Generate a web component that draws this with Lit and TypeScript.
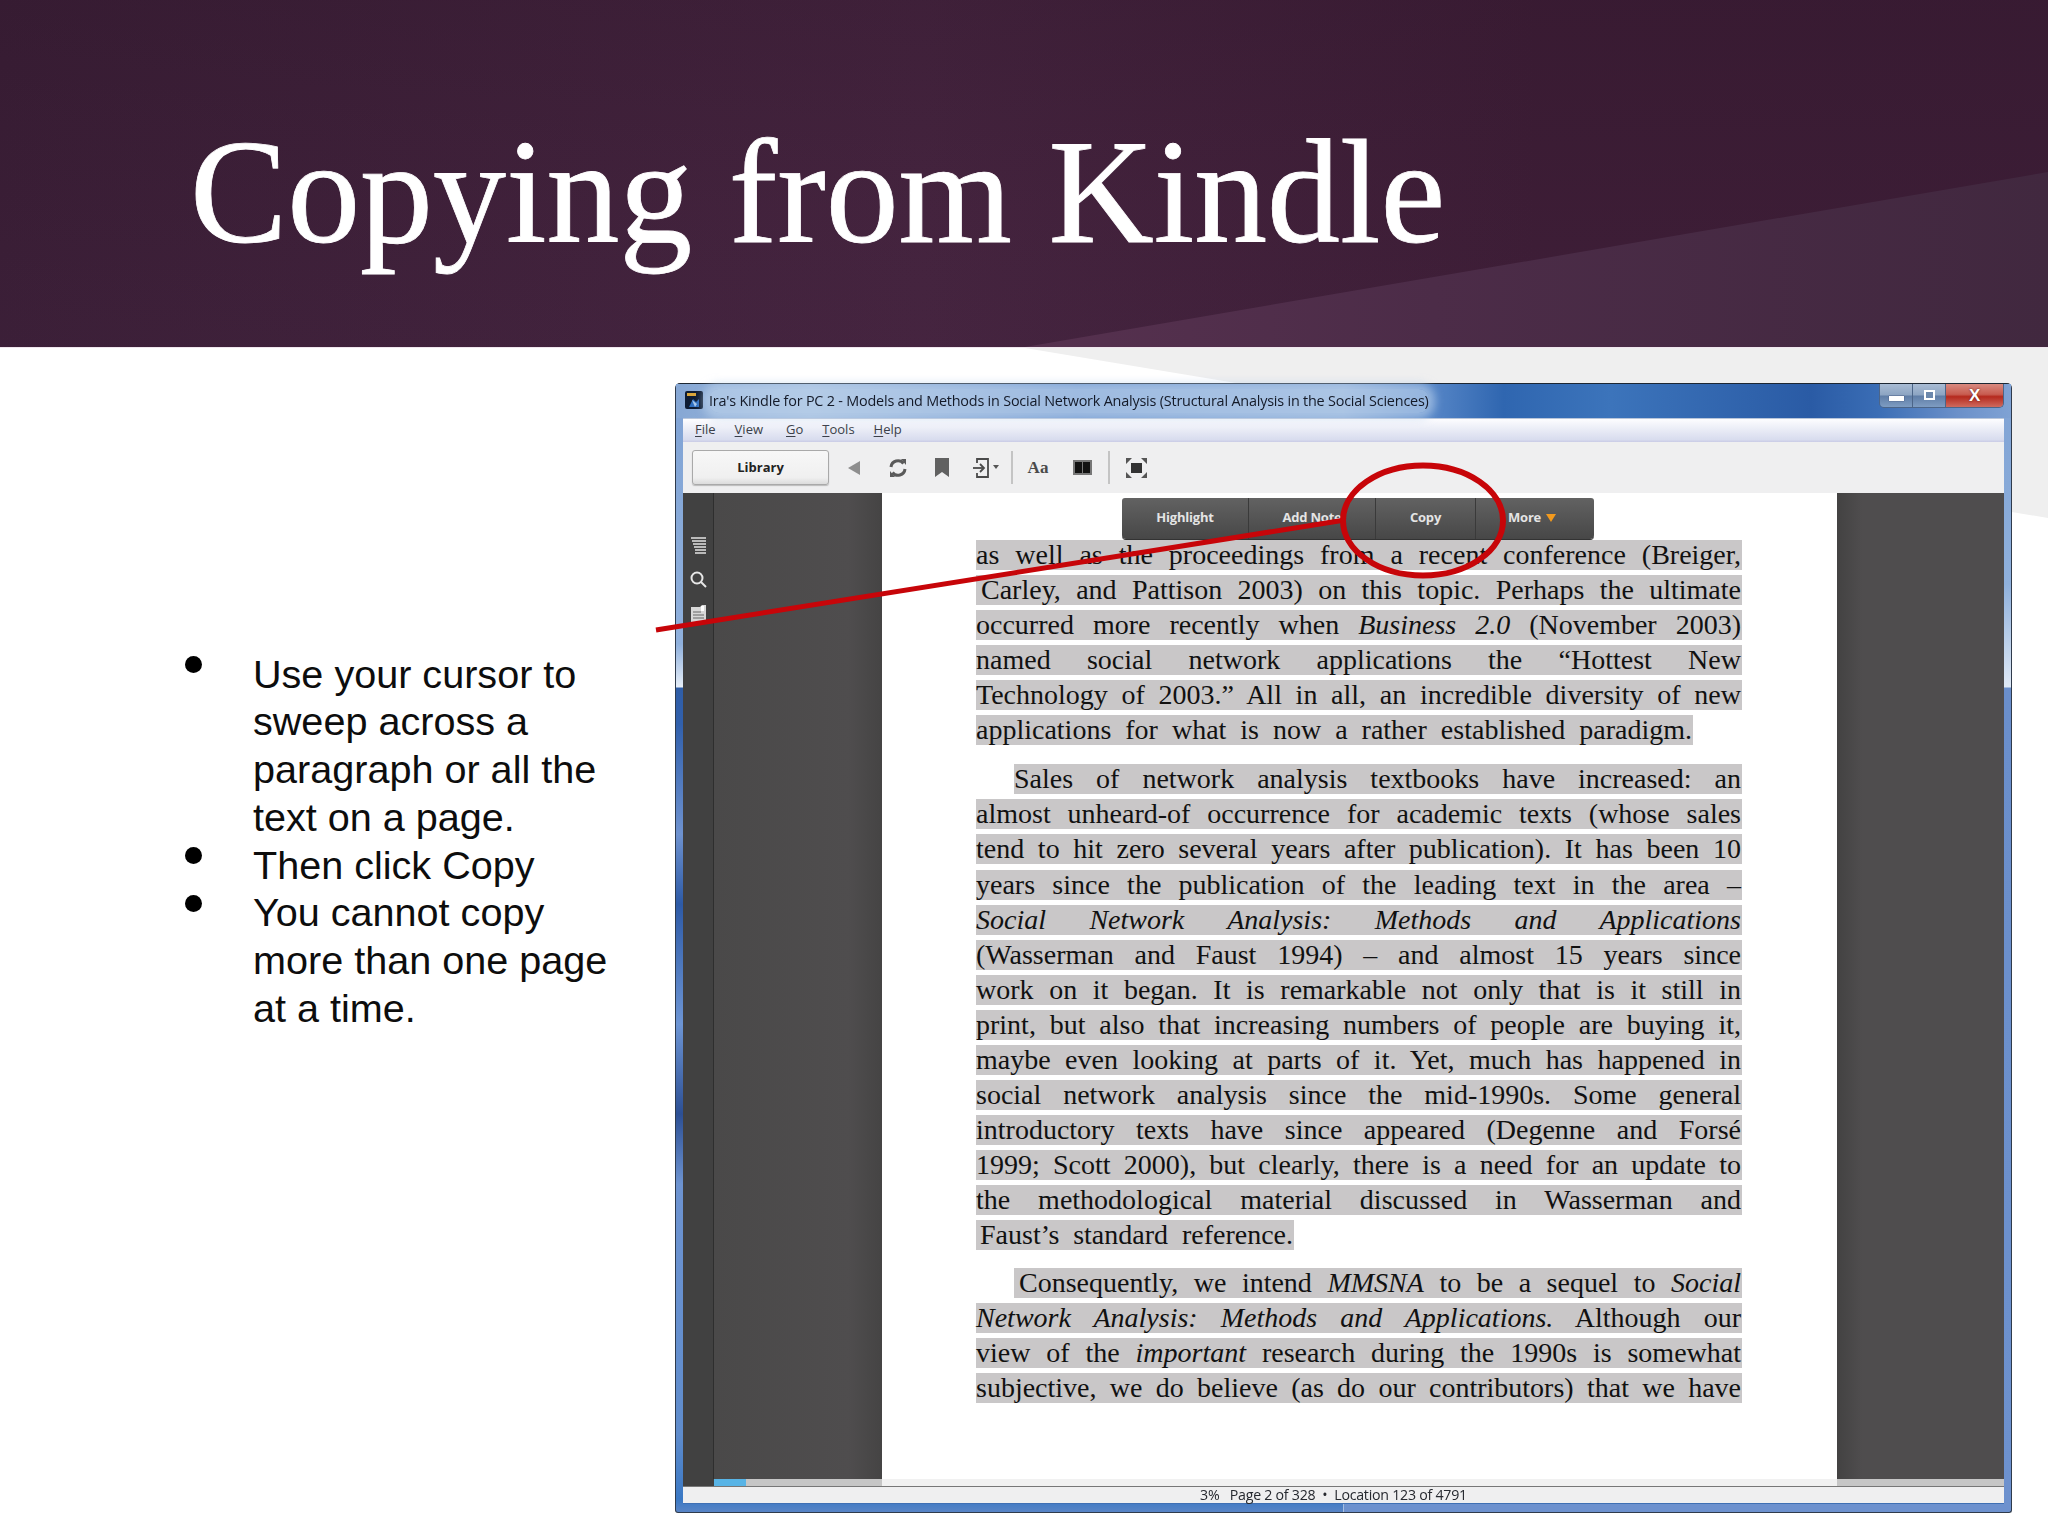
import { LitElement, html, css, svg } from "lit";
import { customElement } from "lit/decorators.js";

type Line = { t: unknown; ml?: number; pl?: number; w?: number };

const paragraphs: Line[][] = [
  [
    { t: "as well as the proceedings from a recent conference (Breiger," },
    { t: "Carley, and Pattison 2003) on this topic. Perhaps the ultimate", pl: 5 },
    { t: html`occurred more recently when <i>Business 2.0</i> (November 2003)` },
    { t: "named social network applications the “Hottest New" },
    { t: "Technology of 2003.” All in all, an incredible diversity of new" },
    { t: "applications for what is now a rather established paradigm.", w: 717 },
  ],
  [
    { t: "Sales of network analysis textbooks have increased: an", ml: 38 },
    { t: "almost unheard-of occurrence for academic texts (whose sales" },
    { t: "tend to hit zero several years after publication). It has been 10" },
    { t: "years since the publication of the leading text in the area –" },
    { t: html`<i>Social Network Analysis: Methods and Applications</i>` },
    { t: "(Wasserman and Faust 1994) – and almost 15 years since" },
    { t: "work on it began. It is remarkable not only that is it still in" },
    { t: "print, but also that increasing numbers of people are buying it," },
    { t: "maybe even looking at parts of it. Yet, much has happened in" },
    { t: "social network analysis since the mid-1990s. Some general" },
    { t: "introductory texts have since appeared (Degenne and Forsé" },
    { t: "1999; Scott 2000), but clearly, there is a need for an update to" },
    { t: "the methodological material discussed in Wasserman and" },
    { t: "Faust’s standard reference.", pl: 4, w: 318 },
  ],
  [
    { t: html`Consequently, we intend <i>MMSNA</i> to be a sequel to <i>Social</i>`, ml: 38, pl: 5 },
    { t: html`<i>Network Analysis: Methods and Applications.</i> Although our` },
    { t: html`view of the <i>important</i> research during the 1990s is somewhat` },
    { t: "subjective, we do believe (as do our contributors) that we have" },
  ],
];

const bullets = [
  ["Use your cursor to", "sweep across a", "paragraph or all the", "text on a page."],
  ["Then click Copy"],
  ["You cannot copy", "more than one page", "at a time."],
];

@customElement("app-root")
export class AppRoot extends LitElement {
  static styles = css`
    :host { display: block; }
    .slide { position: relative; width: 2048px; height: 1536px; overflow: hidden; background: #fff; }
    .greytri { position: absolute; left: 0; top: 348px; width: 2048px; height: 172px; background: #efefef; clip-path: polygon(1025px 0, 2048px 0, 2048px 170px); }
    .header { position: relative; height: 348px; box-sizing: border-box; padding-left: 190px; background:
        linear-gradient(180deg, rgba(40,18,36,.22) 0%, rgba(40,18,36,.04) 60%, rgba(70,40,70,.12) 100%),
        linear-gradient(90deg, #3a1e36 0%, #45243f 45%, #3d1d36 75%, #3c1d36 100%);
        border-bottom: 1px solid #f0e6ee; overflow: hidden; }
    .hi { position: absolute; inset: 0; background: linear-gradient(90deg, #56314f 50%, #4c2c48 70%, #41283f 100%); clip-path: polygon(1025px 347px, 2048px 172px, 2048px 347px); }
    h1 { position: relative; margin: 0; padding-top: 107px; font: 400 148px/1.15 "Liberation Serif", serif; color: #fff; white-space: nowrap; transform: scaleX(.985); transform-origin: left top; -webkit-text-stroke: .8px #fff; }
    .body { position: relative; display: grid; grid-template-columns: 675px 1337px; }
    .notes { padding: 302.5px 0 0 185px; color: #0d0d0d; font: 39.6px/47.8px "Liberation Sans", sans-serif; }
    .item { display: flex; }
    .dot { flex: none; width: 17px; height: 17px; border-radius: 50%; background: #000; margin: 5.5px 51px 0 0; }
    .item div.txt div { white-space: nowrap; }
    .window { margin-top: 35px; height: 1130px; box-sizing: border-box; display: flex; flex-direction: column; padding: 0 7px 8px; border: 1px solid #2f3b4c; border-top-color: #1d2733; border-radius: 5px 5px 3px 3px; filter: blur(.55px);
      background:
        linear-gradient(180deg, #7fa2d4 0, #8fb0dc 260px, #e6eef8 303px, #2f5da6 304px, #3160ac 340px, #6e92cf 450px, #2d5aa6 520px, #6d95d4 640px, #2c4f94 730px, #6d93d0 800px, #5f8ccc 1050px, #3a78c4 1115px, #5d86c6 1130px) left / 50% 100% no-repeat,
        linear-gradient(180deg, #7fa2d4 0, #8fb0dc 200px, #dfe9f6 303px, #6a8ecb 304px, #6d91ce 1130px) right / 50% 100% no-repeat; }
    .title { flex: none; height: 34px; margin: 0 -7px; padding: 0 7px 0 9px; display: flex; align-items: flex-start; position: relative; color: #141a28;
      font: 14.4px/36px "Open Sans", sans-serif; letter-spacing: -.2px;
      background: linear-gradient(90deg, #86a7d4 0, #a4bede 10%, #6f97cf 30%, #8eaed8 50%, #5a89c9 56%, #2f66b0 62%, #3c74bb 70%, #2a5ba5 85%, #3a6db5 90%, #6b90c9 96%, #7fa2d4 100%); }
    .tt { background: rgba(190,212,236,.6); box-shadow: 0 0 8px 6px rgba(190,212,236,.6); height: 24px; margin-top: 5px; line-height: 24px; border-radius: 10px; white-space: nowrap; }
    .logo { flex: none; width: 18px; height: 18px; margin: 7px 6px 0 0; }
    .ctrl { margin-left: auto; display: flex; height: 24px; box-sizing: border-box; border: 1px solid #4c6588; border-top: 0; border-radius: 0 0 5px 5px; overflow: hidden; }
    .ctrl div { display: flex; align-items: center; justify-content: center; width: 32px; background: linear-gradient(180deg, #a9bcd4 0, #8ca4c2 48%, #5f7da6 52%, #7e9cc2 100%); border-right: 1px solid #4c6588; }
    .ctrl .x { width: 57px; border: 0; background: linear-gradient(180deg, #d98a80 0, #c85c50 45%, #b52a1e 55%, #cf6a5e 100%); color: #fff; font: 700 17px/1 "Liberation Sans", sans-serif; text-shadow: 0 0 2px #5a1a10; }
    .min { width: 15px; height: 5px; background: #fff; margin-top: 6px; box-shadow: 0 0 1px #335; }
    .max { width: 11px; height: 10px; border: 2px solid #fff; box-sizing: border-box; background: #6c88ac; margin-top: -2px; }
    .menu { flex: none; height: 24px; display: flex; align-items: flex-start; padding-left: 12px; color: #3b3f49; font: 13px/20px "Open Sans", sans-serif; border-top: 1px solid #b9c6da; box-sizing: border-box;
      background: linear-gradient(180deg, #fdfdff 0, #eef0f8 35%, #d8dcee 90%, #c9cbe6 100%); }
    .menu u { text-underline-offset: 2px; }
    .menu span { margin-right: 19px; }
    .menu span:nth-child(2) { margin-right: 23px; }
    .tools { flex: none; height: 51px; display: flex; align-items: center; padding-left: 9px; background: #efeff0; }
    .lib { width: 137px; height: 35px; box-sizing: border-box; margin-right: 3px; border: 1px solid #a9a9a9; border-radius: 3px; display: flex; align-items: center; justify-content: center; background: linear-gradient(180deg, #f7f7f7, #f0f0f0 80%, #dcdcdc); box-shadow: 0 1px 1px #bbb; color: #222; font: 700 13px/1 "Open Sans", sans-serif; }
    .ic { flex: none; width: 44px; display: flex; justify-content: center; }
    .aa { font: 700 17px/20px "Liberation Serif", serif; color: #4a4a4a; }
    .sep { flex: none; width: 2px; height: 33px; background: #c4c4c4; margin: 0 3px 0 3px; }
    .sep.b { margin: 0 4px 0 4px; }
    .content { flex: 1; min-height: 0; display: grid; grid-template-columns: 31px 168px 955px 167px; box-shadow: inset 0 3px 2px -1px #aaa; }
    .side { background: #414141; border-right: 1px solid #2e2e2e; display: flex; flex-direction: column; align-items: center; padding-top: 44px; gap: 17px; box-sizing: border-box; }
    .side svg { display: block; }
    .gutter { background: linear-gradient(90deg, #4a4949, #4f4d4e 80%, #454444 100%); }
    .gutter.r { background: linear-gradient(90deg, #434242, #4f4d4e 15%); }
    .page { background: #fff; padding: 5px 0 0 94px; box-sizing: border-box; overflow: hidden; }
    .popup { margin-left: 146px; width: 472px; height: 41px; display: grid; grid-template-columns: 126px 127px 100px 119px; border-radius: 3px 3px 4px 4px; background: linear-gradient(180deg, #626262, #474747); color: #e4e4e4; font: 700 13px/39px "Open Sans", sans-serif; text-align: center; box-shadow: 0 1px 0 #333; margin-bottom: 1px; letter-spacing: -.2px; }
    .popup div + div { border-left: 1px solid #3a3a3a; }
    .popup .more { text-align: left; padding-left: 32px; }
    .popup .tri { display: inline-block; width: 0; height: 0; border: 5px solid transparent; border-top: 8px solid #f39a1d; border-bottom: 0; margin-left: 5px; vertical-align: 0; }
    .copy { width: 766px; font: 28px/30px "Liberation Serif", serif; color: #111; }
    .para { display: flex; flex-direction: column; gap: 5.07px; margin-bottom: 18px; }
    .para:first-child { margin-bottom: 19px; }
    .ln { height: 30px; background: #c9c7c8; text-align: justify; text-align-last: justify; box-sizing: border-box; white-space: nowrap; padding-right: 1px; }
    .prog { flex: none; height: 7px; display: grid; grid-template-columns: 31px 32px 136px 955px 167px; }
    .prog i { background: #c6c6c6; }
    .prog i:nth-child(1) { background: #414141; }
    .prog i:nth-child(2) { background: #58b4e6; }
    .prog i:nth-child(4) { background: #f1f1f1; }
    .status { flex: none; height: 18px; display: flex; justify-content: center; padding-right: 20px; background: #efeff0; border-top: 1px solid #777; border-bottom: 1px solid #3f70b4; color: #26292f; font: 14.2px/16px "Open Sans", sans-serif; letter-spacing: -.25px; white-space: pre; box-sizing: border-box; }
    .overlay { position: absolute; left: 0; top: 0; width: 2048px; height: 1536px; pointer-events: none; }
  `;

  private line(l: Line) {
    const parts = [
      l.ml ? `margin-left:${l.ml}px` : "",
      l.pl ? `padding-left:${l.pl}px` : "",
      l.w ? `width:${l.w}px` : "",
    ].filter(Boolean).join(";");
    return html`<div class="ln" style=${parts}>${l.t}</div>`;
  }

  render() {
    return html`<div class="slide">
      <div class="greytri"></div>
      <header class="header"><div class="hi"></div><h1>Copying from Kindle</h1></header>
      <div class="body">
        <div class="notes">
          ${bullets.map(
            (b) => html`<div class="item"><span class="dot"></span><div class="txt">${b.map((x) => html`<div>${x}</div>`)}</div></div>`
          )}
        </div>
        <div class="window">
          <div class="title">
            <svg class="logo" viewBox="0 0 18 18"><rect width="18" height="18" rx="2" fill="#0e1c33"/><rect x="2" y="2" width="9" height="3" fill="#d9a53a"/><path d="M4 16l4-8 3 3 3-3v8z" fill="#2f6fc0"/><path d="M7 9l5 4-2 3z" fill="#a9c9ea"/></svg>
            <span class="tt">Ira's Kindle for PC 2 - Models and Methods in Social Network Analysis (Structural Analysis in the Social Sciences)</span>
            <div class="ctrl"><div><span class="min"></span></div><div><span class="max"></span></div><div class="x">X</div></div>
          </div>
          <div class="menu">
            <span><u>F</u>ile</span><span><u>V</u>iew</span><span><u>G</u>o</span><span><u>T</u>ools</span><span><u>H</u>elp</span>
          </div>
          <div class="tools">
            <div class="lib">Library</div>
            <div class="ic"><svg width="12" height="14" viewBox="0 0 12 14"><path d="M12 0v14L0 7z" fill="#8e8e8e"/></svg></div>
            <div class="ic"><svg width="20" height="20" viewBox="0 0 20 20" fill="none" stroke="#5a5a5a" stroke-width="3"><path d="M3 9a7 7 0 0 1 12.5-3.5"/><path d="M17 11a7 7 0 0 1-12.5 3.5"/><path d="M13 1l5 0v6z" fill="#5a5a5a" stroke="none"/><path d="M7 19l-5 0v-6z" fill="#5a5a5a" stroke="none"/></svg></div>
            <div class="ic"><svg width="14" height="19" viewBox="0 0 14 19"><path d="M0 0h14v19l-7-5-7 5z" fill="#616161"/></svg></div>
            <div class="ic"><svg width="26" height="20" viewBox="0 0 26 20" fill="none" stroke="#4a4a4a" stroke-width="1.8"><path d="M4 5V1h11v18H4v-4"/><path d="M0 10h10"/><path d="M7 6l4 4-4 4"/><path d="M20 7h6l-3 4z" fill="#555" stroke="none"/></svg></div>
            <div class="sep"></div>
            <div class="ic"><span class="aa">Aa</span></div>
            <div class="ic"><svg width="19" height="15" viewBox="0 0 19 15"><rect width="19" height="15" fill="#777"/><rect x="2" y="2" width="7" height="11" fill="#111"/><rect x="10" y="2" width="7" height="11" fill="#111"/></svg></div>
            <div class="sep b"></div>
            <div class="ic"><svg width="21" height="20" viewBox="0 0 21 20"><rect x="5" y="5" width="11" height="10" fill="#333"/><path d="M0 0h6L0 6zM21 0h-6l6 6zM0 20h6l-6-6zM21 20h-6l6-6z" fill="#555"/></svg></div>
          </div>
          <div class="content">
            <div class="side">
              <svg width="15" height="17" viewBox="0 0 15 17" stroke="#e2e2e2" stroke-width="1.3"><path d="M0 1h15M1 4h14M2 7h13M3 10h12M4 13h11M4 16h11"/></svg>
              <svg width="17" height="17" viewBox="0 0 17 17" fill="none" stroke="#e6e6e6" stroke-width="2"><circle cx="7" cy="7" r="5.5"/><path d="M11 11l5 5"/></svg>
              <svg width="15" height="17" viewBox="0 0 15 17"><path d="M0 2h9l2-2h4v17H0z" fill="#d8d8d8"/><path d="M2 7h8M2 10h11M2 13h11" stroke="#666" stroke-width="1"/><path d="M10 1h3v5h-3z" fill="#fff"/></svg>
            </div>
            <div class="gutter"></div>
            <div class="page">
              <div class="popup"><div>Highlight</div><div>Add Note</div><div>Copy</div><div class="more">More<span class="tri"></span></div></div>
              <div class="copy">
                ${paragraphs.map((p) => html`<div class="para">${p.map((l) => this.line(l))}</div>`)}
              </div>
            </div>
            <div class="gutter r"></div>
          </div>
          <div class="prog"><i></i><i></i><i></i><i></i><i></i></div>
          <div class="status">3%   Page 2 of 328  •  Location 123 of 4791</div>
        </div>
      </div>
      <svg class="overlay" viewBox="0 0 2048 1536" fill="none">
        ${svg`<path d="M656 630L1345 520" stroke="#c70509" stroke-width="5"/>
        <ellipse cx="1423" cy="520.5" rx="80" ry="55" stroke="#c70509" stroke-width="6"/>`}
      </svg>
    </div>`;
  }
}
